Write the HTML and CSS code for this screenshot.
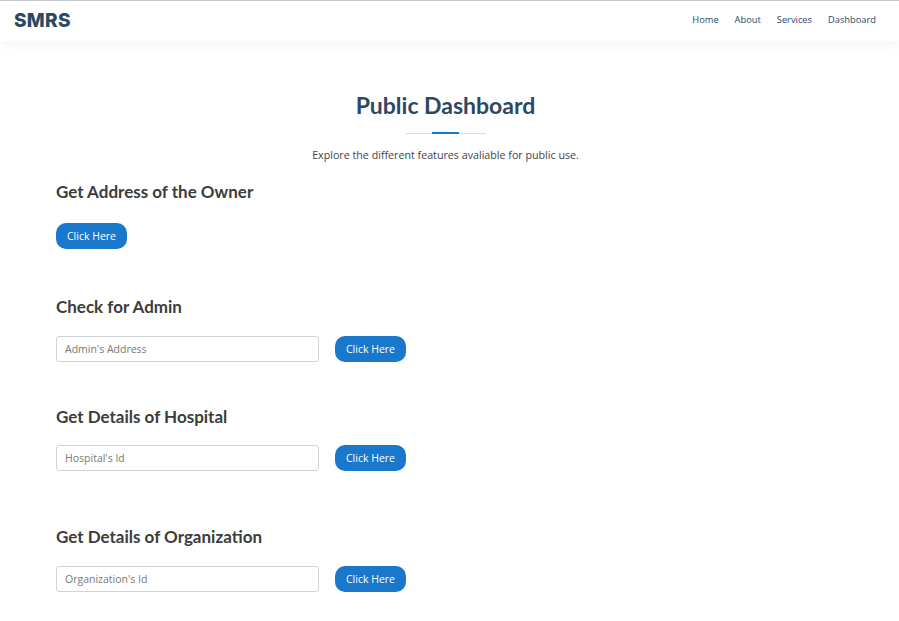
FILE: index.html
```html
<!DOCTYPE html>
<html>
<head>
<meta charset="utf-8">
<link rel="stylesheet" href="styles.css">
</head>
<body>
<header class="header">
  <div class="logo">SMRS</div>
  <nav class="nav">
    <a href="#">Home</a>
    <a href="#">About</a>
    <a href="#">Services</a>
    <a href="#">Dashboard</a>
  </nav>
</header>
<main class="main">
  <div class="section-title">
    <h2>Public Dashboard</h2>
    <div class="divider"><span></span></div>
    <p>Explore the different features avaliable for public use.</p>
  </div>
  <section class="feature f1">
    <h3>Get Address of the Owner</h3>
    <div class="row"><button class="btn">Click Here</button></div>
  </section>
  <section class="feature f2">
    <h3>Check for Admin</h3>
    <div class="row"><input class="field" placeholder="Admin's Address"><button class="btn">Click Here</button></div>
  </section>
  <section class="feature f3">
    <h3>Get Details of Hospital</h3>
    <div class="row"><input class="field" placeholder="Hospital's Id"><button class="btn">Click Here</button></div>
  </section>
  <section class="feature f4">
    <h3>Get Details of Organization</h3>
    <div class="row"><input class="field" placeholder="Organization's Id"><button class="btn">Click Here</button></div>
  </section>
</main>
</body>
</html>
```
FILE: styles.css
```css
* { box-sizing: border-box; }
html, body { margin: 0; padding: 0; background: #fff; }
body { font-family: "Open Sans", "Liberation Sans", sans-serif; color: #444; }

.header {
  height: 41px;
  border-top: 1px solid #c8c8c8;
  background: #fff;
  display: flex;
  align-items: center;
  justify-content: space-between;
  padding: 0 23px 0 14px;
  box-shadow: 0 2px 12px rgba(25, 119, 204, 0.08);
  position: relative;
}
.logo {
  font-family: "Inter", "Lato", sans-serif;
  font-weight: 800;
  font-size: 19px;
  letter-spacing: 0.3px;
  color: #2c4964;
  margin-top: -1px;
}
.nav { display: flex; gap: 16px; margin-top: -4px; }
.nav a {
  font-size: 9.3px;
  color: #2c4964;
  text-decoration: none;
}

.main { padding: 0 56px; }
.section-title { text-align: center; padding-top: 50px; margin-left: -8px; margin-right: 0; }
.section-title h2 {
  margin: 0;
  font-family: "Lato", "Inter", sans-serif;
  font-weight: 700;
  font-size: 23px;
  line-height: 28px;
  color: #2c4964;
}
.divider {
  width: 80px;
  height: 1px;
  background: #ddd;
  margin: 14px auto 0;
  position: relative;
}
.divider span {
  position: absolute;
  left: 26px;
  top: -1px;
  width: 27px;
  height: 2px;
  background: #1977cc;
}
.section-title p { margin: 14px 0 0; font-size: 10.7px; line-height: 14px; color: #444; }

.feature h3 {
  margin: 0;
  font-family: "Lato", "Inter", sans-serif;
  font-weight: 700;
  font-size: 17px;
  line-height: 20px;
  color: #3c3c3c;
}
.f1 { margin-top: 20px; }
.f2 { margin-top: 48px; }
.f3 { margin-top: 45px; }
.f4 { margin-top: 56px; }
.row { display: flex; gap: 16px; margin-top: 19px; align-items: center; }
.f1 .row { margin-top: 21px; }
.f3 .row { margin-top: 18px; }
.field {
  width: 263px;
  height: 26px;
  border: 1px solid #ced4da;
  border-radius: 3px;
  padding: 0 8px;
  font-family: "Open Sans", sans-serif;
  font-size: 10.5px;
  color: #444;
  outline: none;
}
.field::placeholder { color: #777; }
.btn {
  width: 71px;
  height: 26px;
  border: none;
  border-radius: 10px;
  background: #1977cc;
  color: #fff;
  font-family: "Open Sans", sans-serif;
  font-size: 10.5px;
  padding: 0;
}
```
